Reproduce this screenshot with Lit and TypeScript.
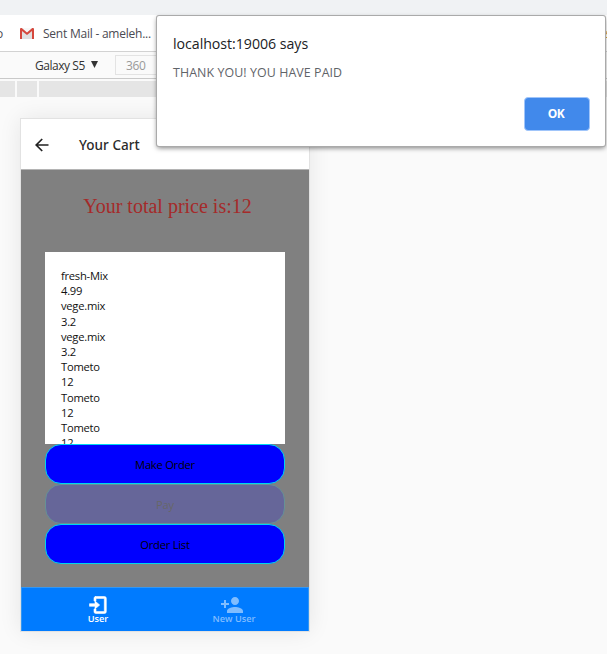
import { LitElement, html, css } from "lit";
import { customElement, property } from "lit/decorators.js";

@customElement("browser-chrome")
class BrowserChrome extends LitElement {
  static styles = css`
    :host { display: block; font-family: "Open Sans", "Noto Sans", sans-serif; }
    .strip { height: 15px; background: #f0f2f4; }
    .bookmarks { height: 36px; background: #fff; display: flex; align-items: center; color: #4a4a52; font-size: 12px; border-bottom: 1px solid #d2d2d2; overflow: hidden; }
    .prev { width: 20px; margin-left: -5px; padding-left: 1px; box-sizing: border-box; margin-right: 1px; flex: none; }
    .gmail { width: 14px; height: 11px; margin: 1px 9px 0 4px; flex: none; }
    .mail { letter-spacing: -0.23px; white-space: nowrap; }
    .edge { margin: 0 -4px 0 auto; color: #d99a2b; }
    .tools { height: 26px; background: #fafafa; border-bottom: 1px solid #c9c9c9; display: flex; align-items: center; font-size: 12px; color: #333; padding-left: 35px; }
    .device { width: 51px; letter-spacing: -0.45px; white-space: nowrap; }
    .caret { width: 7px; height: 7px; margin: 0 17px 1px 5px; }
    .size { box-sizing: border-box; width: 60px; height: 20px; border: 1px solid #e3e3e3; color: #999; padding-left: 10px; line-height: 19px; letter-spacing: -0.35px; }
    .ruler { height: 18px; padding-top: 2px; box-sizing: border-box; display: flex; gap: 2px; background: #fafafa; }
    .seg { background: #e5e5e5; height: 16px; }
    .a { width: 15px; } .b { width: 20px; } .c { flex: 1; }
  `;
  render() {
    return html`
      <div class="strip"></div>
      <div class="bookmarks">
        <span class="prev">o</span>
        <svg class="gmail" viewBox="0 0 14 11">
          <path fill="#e0e0e0" d="M1 0h12v11H1z" />
          <path fill="#f7f7f7" d="M2 0h10L7 5z" />
          <path fill="#d5473c" d="M0 1q0-1 1-1h.7L7 4.5 12.300 0h.7q1 0 1 1v10h-2V3L7 7 2 3v8H0z" />
        </svg>
        <span class="mail">Sent Mail - ameleh...</span>
        <span class="edge">s</span>
      </div>
      <div class="tools">
        <span class="device">Galaxy S5</span>
        <svg class="caret" viewBox="0 0 7 7"><path fill="#333" d="M0 0h7L3.500 7z" /></svg>
        <span class="size">360</span>
      </div>
      <div class="ruler"><div class="seg a"></div><div class="seg b"></div><div class="seg c"></div></div>
    `;
  }
}

@customElement("cart-button")
class CartButton extends LitElement {
  @property() label = "";
  @property({ type: Boolean, reflect: true }) disabled = false;
  static styles = css`
    :host { display: block; height: 40px; }
    :host([disabled]) { opacity: 0.2; }
    .btn { display: block; box-sizing: border-box; width: 100%; height: 40px; border: 1px solid #00d5f0; border-radius: 16px; background: #00f; color: #000; font: 11.2px "Open Sans", "Noto Sans", sans-serif; letter-spacing: -0.25px; padding: 0; }
  `;
  render() {
    return html`<button class="btn" ?disabled=${this.disabled}>${this.label}</button>`;
  }
}

@customElement("phone-screen")
class PhoneScreen extends LitElement {
  static styles = css`
    :host { display: flex; flex-direction: column; width: 288px; height: 512px; box-shadow: 0 0 0 1px #e2e2e2, 0 0 22px rgba(0, 0, 0, 0.09); font-family: "Open Sans", "Noto Sans", sans-serif; }
    .header { height: 51px; box-sizing: border-box; background: #fff; border-bottom: 1px solid #b4b4b4; display: flex; align-items: center; }
    .back { width: 14px; height: 14px; margin: 1px 30px 0 14px; }
    .title { font-size: 13.5px; font-weight: 500; font-family: "Noto Sans", sans-serif; color: #2a2a2a; letter-spacing: 0.05px; margin-top: 2px; }
    .body { height: 417px; background: #808080; padding: 0 24px; box-sizing: border-box; }
    .total { height: 82px; box-sizing: border-box; padding: 24px 0 0 5px; text-align: center; color: #a52a2a; font: 20px/24px "Liberation Serif", serif; white-space: nowrap; }
    .list { height: 192px; box-sizing: border-box; background: #fff; padding: 16px 16px 0; overflow: hidden; font-size: 11.2px; line-height: 15.2px; color: #111; }
    .row { letter-spacing: -0.25px; }
    .tabs { height: 44px; box-sizing: border-box; border: 1px solid #3397f3; border-width: 1px 1px 0; background: #007bff; display: flex; padding: 0 6px 0 8px; color: #fff; }
    .tab { flex: 1; display: flex; flex-direction: column; align-items: center; font-size: 9.2px; line-height: 11px; font-weight: 600; padding-top: 7px; }
    .label { margin-top: -2px; }
    .off { color: #80bdff; }
    .icon { width: 20px; height: 20px; display: block; fill: currentColor; flex: none; }
    .bold { stroke: currentColor; stroke-width: 0.6; }
    .person { margin-right: 4px; }
  `;
  render() {
    const items = [
      ["fresh-Mix", "4.99"], ["vege.mix", "3.2"], ["vege.mix", "3.2"],
      ["Tometo", "12"], ["Tometo", "12"], ["Tometo", "12"],
    ];
    return html`
      <div class="header">
        <svg class="back" viewBox="0 0 14 14"><path fill="none" stroke="#222" stroke-width="1.7" d="M7.200 1 1.200 7l6 6M1.200 7h12.300" /></svg>
        <span class="title">Your Cart</span>
      </div>
      <div class="body">
        <div class="total">Your total price is:12</div>
        <div class="list">
          ${items.map(([name, price]) => html`<div class="row">${name}</div><div class="row">${price}</div>`)}
        </div>
        <cart-button label="Make Order"></cart-button>
        <cart-button label="Pay" disabled></cart-button>
        <cart-button label="Order List"></cart-button>
      </div>
      <div class="tabs">
        <div class="tab">
          <svg class="icon bold" viewBox="0 0 20 20"><path d="M7 1.500h9.500q1.800 0 1.800 1.800v13.400q0 1.800-1.800 1.800H7.800q-1.800 0-1.800-1.800V14h2v2.600h8.300V3.400H8V6H6V3.300q0-1.800 1.800-1.800zM1.500 8.700H7V6l4.700 4L7 14v-2.700H1.500z" /></svg>
          <span class="label">User</span>
        </div>
        <div class="tab off">
          <svg class="icon person" viewBox="2 2 20 20" overflow="visible"><path d="M15 12c2.210 0 4-1.790 4-4s-1.790-4-4-4-4 1.790-4 4 1.790 4 4 4zm-9-2V7H4v3H1v2h3v3h2v-3h3v-2H6zm9 4c-2.670 0-8 1.340-8 4v2h16v-2c0-2.660-5.330-4-8-4z" /></svg>
          <span class="label">New User</span>
        </div>
      </div>
    `;
  }
}

@customElement("alert-dialog")
class AlertDialog extends LitElement {
  static styles = css`
    :host { display: flex; flex-direction: column; box-sizing: border-box; width: 448px; height: 130px; padding: 18px 15px 15px 16px; background: #fff; border-radius: 2px; box-shadow: 0 0 0 1px #aaa, 0 2px 5px rgba(0, 0, 0, 0.5); font-family: "Open Sans", "Noto Sans", sans-serif; }
    .origin { font-size: 14.2px; line-height: 20px; color: #202124; letter-spacing: -0.04px; }
    .message { font-size: 12.4px; line-height: 16px; color: #5f6368; margin-top: 11px; letter-spacing: 0.09px; white-space: nowrap; }
    .ok { margin-top: auto; align-self: flex-end; box-sizing: border-box; width: 66px; height: 34px; border: 1px solid #a0c5fa; border-radius: 4px; background: #4189eb; color: #fff; font: 700 12px "Open Sans", sans-serif; letter-spacing: -0.4px; padding: 0 2px 2px 0; }
  `;
  render() {
    return html`
      <div class="origin">localhost:19006 says</div>
      <div class="message">THANK YOU! YOU HAVE PAID</div>
      <button class="ok">OK</button>
    `;
  }
}

@customElement("app-root")
class AppRoot extends LitElement {
  static styles = css`
    :host { display: block; position: relative; height: 654px; overflow: hidden; background: #fafafa; }
    .stage { padding: 22px 0 0 21px; }
    .dialog { position: absolute; left: 157px; top: 16px; }
  `;
  render() {
    return html`
      <browser-chrome></browser-chrome>
      <div class="stage"><phone-screen></phone-screen></div>
      <alert-dialog class="dialog"></alert-dialog>
    `;
  }
}
